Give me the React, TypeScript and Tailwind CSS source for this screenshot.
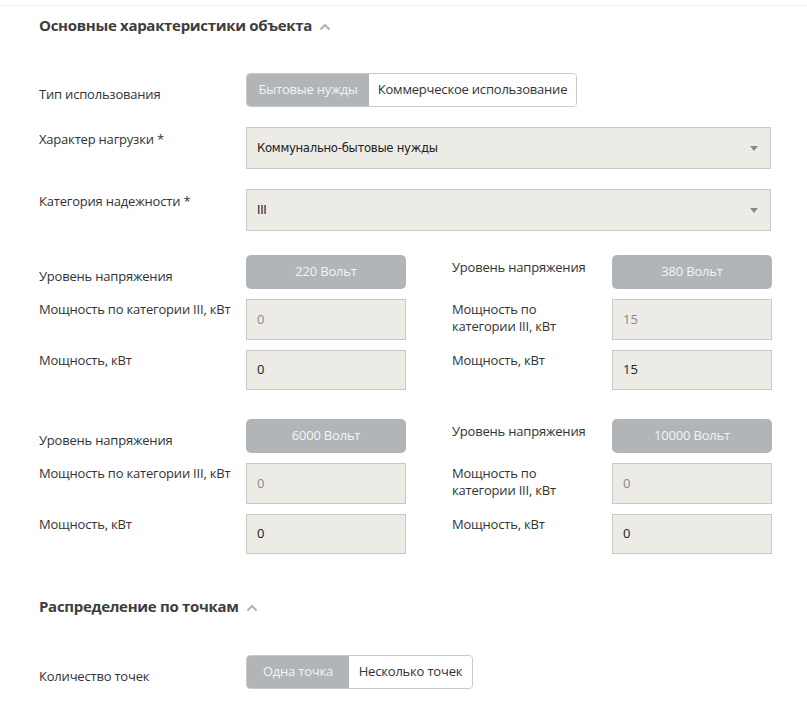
import React from "react";

const sans = { fontFamily: '"Open Sans", "Noto Sans", sans-serif' };

function Chevron() {
  return (
    <svg width="12" height="9" viewBox="0 0 12 9" className="ml-[7px] mt-[3px]">
      <path d="M1.5 7.5 L6 3 L10.5 7.5" fill="none" stroke="#b5b5b5" strokeWidth="2.2" />
    </svg>
  );
}

function Heading({ children }: { children: React.ReactNode }) {
  return (
    <div className="flex items-center pl-[39px]">
      <h2 className="text-[15px] font-bold leading-5 tracking-[-0.3px] text-[#3d3d3d]">{children}</h2>
      <Chevron />
    </div>
  );
}

function Toggle({ on, off, onW, offW }: { on: string; off: string; onW: string; offW: string }) {
  return (
    <div className="flex h-[34px] overflow-hidden rounded-[4px] border border-[#c9c9c9] text-[13px] tracking-[-0.2px]">
      <div className={`flex items-center justify-center bg-[#b1b5b8] text-[#f4f4f4] ${onW}`}>{on}</div>
      <div className={`flex items-center justify-center bg-white text-[#333] ${offW}`}>{off}</div>
    </div>
  );
}

function Select({ value }: { value: string }) {
  return (
    <div className="flex h-[42px] w-[525px] items-center justify-between border border-[#cbcbc6] bg-[#ecebe5] pl-[10px] pr-[12px]">
      <span
        className="text-[13px] tracking-[-0.3px] text-[#222]"
        style={{ fontFamily: '"DejaVu Sans Condensed", "Liberation Sans Narrow", sans-serif' }}
      >
        {value}
      </span>
      <svg width="8" height="5" viewBox="0 0 8 5">
        <path d="M0 0 L8 0 L4 5 Z" fill="#888" />
      </svg>
    </div>
  );
}

function VoltButton({ label }: { label: string }) {
  return (
    <div className="flex h-[34px] w-[160px] items-center justify-center rounded-[5px] bg-[#b1b5b8] text-[13px] tracking-[-0.2px] text-[#f4f4f4]">
      {label}
    </div>
  );
}

function Field({ value, disabled }: { value: string; disabled?: boolean }) {
  return (
    <div
      className={`flex w-[160px] items-center border border-[#c9c9c4] bg-[#ecebe5] pl-[10px] text-[13px] ${
        disabled ? "text-[#8a8a8a]" : "text-[#222]"
      }`}
    >
      {value}
    </div>
  );
}

function Label({ children, className = "" }: { children: React.ReactNode; className?: string }) {
  return (
    <div className={`text-[13px] leading-[17px] tracking-[-0.2px] text-[#333] ${className}`}>{children}</div>
  );
}

function VoltBlock({ left, right, lp, rp }: { left: string; right: string; lp: string; rp: string }) {
  return (
    <div className="flex pl-[39px]">
      <div className="flex w-[367px] flex-col gap-[10px]">
        <div className="flex h-[34px]">
          <Label className="w-[207px] pt-[13px]">Уровень напряжения</Label>
          <VoltButton label={left} />
        </div>
        <div className="flex h-[41px]">
          <Label className="w-[207px] pt-[2px]">Мощность по категории III, кВт</Label>
          <Field value={lp} disabled />
        </div>
        <div className="flex h-[40px]">
          <Label className="w-[207px] pt-[2px]">Мощность, кВт</Label>
          <Field value={lp} />
        </div>
      </div>
      <div className="ml-[46px] flex w-[320px] flex-col gap-[10px]">
        <div className="flex h-[34px]">
          <Label className="w-[160px] pt-[4px]">Уровень напряжения</Label>
          <VoltButton label={right} />
        </div>
        <div className="flex h-[41px]">
          <Label className="w-[160px] pt-[2px]">
            Мощность по
            <br />
            категории III, кВт
          </Label>
          <Field value={rp} disabled />
        </div>
        <div className="flex h-[40px]">
          <Label className="w-[160px] pt-[2px]">Мощность, кВт</Label>
          <Field value={rp} />
        </div>
      </div>
    </div>
  );
}

export default function App() {
  return (
    <div className="min-h-[711px] w-[807px] bg-white pt-[5px]" style={sans}>
      <div className="border-t border-[#f0f0f0] pt-[9px]">
        <Heading>Основные характеристики объекта</Heading>

        <div className="mt-[38px] flex pl-[39px]">
          <Label className="w-[207px] pt-[13px]">Тип использования</Label>
          <Toggle on="Бытовые нужды" off="Коммерческое использование" onW="w-[122px]" offW="w-[207px]" />
        </div>

        <div className="mt-[20px] flex pl-[39px]">
          <Label className="w-[207px] pt-[4px]">Характер нагрузки *</Label>
          <Select value="Коммунально-бытовые нужды" />
        </div>

        <div className="mt-[20px] flex pl-[39px]">
          <Label className="w-[207px] pt-[4px]">Категория надежности *</Label>
          <Select value="III" />
        </div>

        <div className="mt-[24px]">
          <VoltBlock left="220 Вольт" right="380 Вольт" lp="0" rp="15" />
        </div>

        <div className="mt-[29px]">
          <VoltBlock left="6000 Вольт" right="10000 Вольт" lp="0" rp="0" />
        </div>

        <div className="mt-[42px]">
          <Heading>Распределение по точкам</Heading>
        </div>

        <div className="mt-[39px] flex pl-[39px]">
          <Label className="w-[207px] pt-[13px]">Количество точек</Label>
          <Toggle on="Одна точка" off="Несколько точек" onW="w-[102px]" offW="w-[123px]" />
        </div>
      </div>
    </div>
  );
}
